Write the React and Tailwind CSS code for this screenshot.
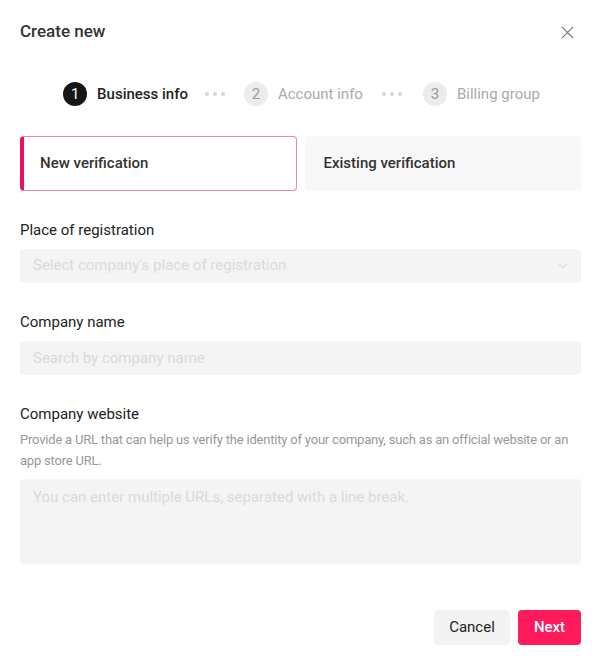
import React from "react";

const font = { fontFamily: "Roboto, 'Noto Sans', sans-serif" };

function Dots({ className }) {
  return (
    <div className={"flex items-center gap-[4px] " + className}>
      <span className="w-[4px] h-[4px] rounded-full bg-[#d4d4d4]" />
      <span className="w-[4px] h-[4px] rounded-full bg-[#d4d4d4]" />
      <span className="w-[4px] h-[4px] rounded-full bg-[#d4d4d4]" />
    </div>
  );
}

export default function App() {
  return (
    <div className="w-[600px] h-[656px] bg-white relative" style={font}>
      <div className="pl-5 pr-[19px] pt-[20px]">
        <div className="flex items-center justify-between h-[24px]">
          <div className="text-[17px] text-[#333] font-medium">Create new</div>
          <svg width="15" height="15" viewBox="0 0 16 16" className="mr-[6px]">
            <path d="M2 2 L14 14 M14 2 L2 14" stroke="#777" strokeWidth="1.3" />
          </svg>
        </div>

        <div className="flex items-center justify-center mt-[38px] h-[24px] pl-[2px]">
          <div className="flex items-center">
            <span className="w-[24px] h-[24px] rounded-full bg-[#161616] text-white text-[15px] flex items-center justify-center">1</span>
            <span className="ml-[10px] text-[15px] text-[#222] font-medium">Business info</span>
          </div>
          <Dots className="ml-[17px] mr-[19px]" />
          <div className="flex items-center">
            <span className="w-[24px] h-[24px] rounded-full bg-[#ececec] text-[#999] text-[15px] flex items-center justify-center">2</span>
            <span className="ml-[10px] text-[15px] text-[#aaa]">Account info</span>
          </div>
          <Dots className="ml-[19px] mr-[21px]" />
          <div className="flex items-center">
            <span className="w-[24px] h-[24px] rounded-full bg-[#ececec] text-[#999] text-[15px] flex items-center justify-center">3</span>
            <span className="ml-[10px] text-[15px] text-[#aaa]">Billing group</span>
          </div>
        </div>

        <div className="grid grid-cols-2 gap-[8px] mt-[30px]">
          <div className="h-[55px] rounded-[4px] border border-[#ee85a2] border-l-[4px] border-l-[#f0105a] flex items-center pl-[16px] text-[15px] font-medium text-[#333]">
            New verification
          </div>
          <div className="h-[55px] rounded-[4px] bg-[#f8f8f8] flex items-center pl-[19px] text-[15px] font-medium text-[#333]">
            Existing verification
          </div>
        </div>

        <div className="mt-[28px] text-[15px] text-[#222]">Place of registration</div>
        <div className="mt-[7px] h-[34px] rounded-[4px] bg-[#f4f4f4] flex items-center justify-between pl-[13px] pr-[12px]">
          <span className="text-[15px] text-[#dadada]">Select company's place of registration</span>
          <svg width="12" height="12" viewBox="0 0 12 12">
            <path d="M2 4 L6 8 L10 4" stroke="#ddd" strokeWidth="1.2" fill="none" />
          </svg>
        </div>

        <div className="mt-[28px] text-[15px] text-[#222]">Company name</div>
        <div className="mt-[8px] h-[34px] rounded-[4px] bg-[#f4f4f4] flex items-center px-[13px]">
          <span className="text-[15px] text-[#dadada]">Search by company name</span>
        </div>

        <div className="mt-[28px] text-[15px] text-[#222]">Company website</div>
        <div className="mt-[3px] text-[13px] leading-[21px] tracking-[-0.2px] text-[#999]">
          Provide a URL that can help us verify the identity of your company, such as an official website or an app store URL.
        </div>
        <div className="mt-[8px] h-[85px] rounded-[4px] bg-[#f4f4f4] px-[13px] pt-[6px]">
          <span className="text-[15px] text-[#dadada]">You can enter multiple URLs, separated with a line break.</span>
        </div>

        <div className="flex justify-end gap-[8px] mt-[46px]">
          <button className="h-[35px] w-[76px] rounded-[4px] bg-[#f3f3f3] text-[15px] text-[#222]">Cancel</button>
          <button className="h-[35px] w-[63px] rounded-[4px] bg-[#fe1a5b] text-[15px] text-white font-medium">Next</button>
        </div>
      </div>
    </div>
  );
}
